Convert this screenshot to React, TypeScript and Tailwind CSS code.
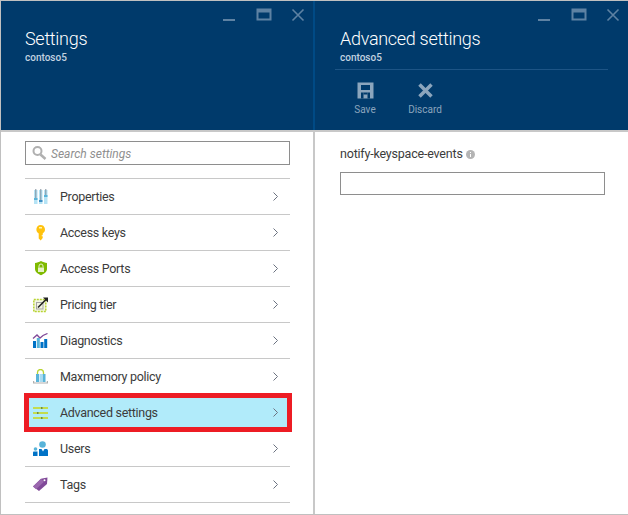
import React from "react";

const font = "font-['Roboto','Open_Sans',sans-serif]";

function WinControls() {
  return (
    <div className="absolute top-[7px] right-[8px] flex items-start">
      <svg width="14" height="14" viewBox="0 0 14 14" className="mr-[20px] mt-[1px]"><rect x="1" y="10" width="12" height="2" fill="#5e82a3" /></svg>
      <svg width="16" height="14" viewBox="0 0 16 14" className="mr-[19px]"><path d="M1.500 1.500h13v10h-13z M1.500 3.500h13" fill="none" stroke="#5e82a3" strokeWidth="2" /></svg>
      <svg width="14" height="14" viewBox="0 0 14 14"><path d="M1.500 1.500l11 11M12.500 1.500l-11 11" stroke="#5e82a3" strokeWidth="1.600" fill="none" /></svg>
    </div>
  );
}

const icons: Record<string, React.ReactNode> = {
  props: (
    <svg width="16" height="16" viewBox="0 0 16 16">
      <rect x="2" y="1" width="3.500" height="14" fill="#b5e3f5" />
      <rect x="7" y="1" width="3.500" height="14" fill="#b5e3f5" />
      <rect x="12" y="1" width="3.500" height="14" fill="#b5e3f5" />
      <rect x="3.300" y="0" width="1" height="9" fill="#7f8f9d" />
      <rect x="8.300" y="0" width="1" height="12" fill="#7f8f9d" />
      <rect x="13.300" y="0" width="1" height="6" fill="#7f8f9d" />
      <rect x="2" y="9" width="3.500" height="2" fill="#59b4d9" />
      <rect x="7" y="11" width="3.500" height="2" fill="#3e8fc4" />
      <rect x="12" y="6" width="3.500" height="2" fill="#59b4d9" />
    </svg>
  ),
  key: (
    <svg width="16" height="16" viewBox="0 0 16 16">
      <path d="M8.500 0a4.500 4.500 0 0 1 2.200 8.400v1.800h-1v1h1V13l-2 2.500-2-2V8.400A4.500 4.500 0 0 1 8.500 0z" fill="#ffc20e" />
      <rect x="7" y="2" width="3" height="1.500" fill="#fff3b0" />
    </svg>
  ),
  shield: (
    <svg width="16" height="16" viewBox="0 0 16 16">
      <path d="M9 0c2 1.200 4 1.800 6 2v6c0 3-3 4.800-6 6.200-3-1.400-6-3.200-6-6.200V2c2-.2 4-.8 6-2z" fill="#7fba00" />
      <rect x="6" y="6.500" width="6" height="4.500" fill="#e6f2c8" />
      <path d="M7 6.500V5a2 2 0 0 1 4 0v1.500" fill="none" stroke="#e6f2c8" strokeWidth="1" />
    </svg>
  ),
  pricing: (
    <svg width="16" height="16" viewBox="0 0 16 16">
      <rect x="1.800" y="2.500" width="12" height="12" fill="#f3f6e2" stroke="#b8d432" strokeWidth="1.500" strokeDasharray="2 1" />
      <rect x="4.500" y="5.500" width="6.500" height="6.500" fill="none" stroke="#a5a5a5" strokeWidth="1" />
      <path d="M6 10.500L14.500 2" stroke="#222" strokeWidth="1.600" />
      <path d="M11 0.500h5v5z" fill="#222" />
    </svg>
  ),
  diag: (
    <svg width="16" height="16" viewBox="0 0 16 16">
      <path d="M1 5.500l4-3.500 3 3 3-2.500 4.500-2" fill="none" stroke="#804998" strokeWidth="1.300" />
      <rect x="1" y="8" width="3" height="7" fill="#0072c6" />
      <rect x="4.800" y="5" width="3" height="10" fill="#59b4d9" />
      <rect x="8.500" y="9" width="3" height="6" fill="#0072c6" />
      <rect x="12.200" y="6" width="3" height="9" fill="#0072c6" />
    </svg>
  ),
  mem: (
    <svg width="16" height="16" viewBox="0 0 16 16">
      <path d="M5.500 6V3.500a3 3 0 0 1 6 0V6" fill="none" stroke="#b8d432" strokeWidth="1.300" />
      <rect x="4" y="5" width="3" height="8" fill="#59b4d9" />
      <rect x="7.500" y="5" width="2.500" height="8" fill="#a8dcf2" />
      <rect x="10.500" y="5" width="3" height="8" fill="#59b4d9" />
      <path d="M1.600 12v2h13.800v-2" fill="none" stroke="#b0b0b0" strokeWidth="1.200" />
    </svg>
  ),
  adv: (
    <svg width="16" height="16" viewBox="0 0 16 16">
      <rect x="1" y="2" width="15" height="2" fill="#c3dc4e" />
      <rect x="1" y="7" width="15" height="2" fill="#c3dc4e" />
      <rect x="1" y="12" width="15" height="2" fill="#c3dc4e" />
      <rect x="9" y="2" width="1.500" height="2" fill="#6f8a45" />
      <rect x="5" y="7" width="1.500" height="2" fill="#6f8a45" />
      <rect x="9" y="12" width="1.500" height="2" fill="#6f8a45" />
    </svg>
  ),
  users: (
    <svg width="16" height="16" viewBox="0 0 16 16">
      <circle cx="10.500" cy="3.500" r="3.300" fill="#59b4d9" />
      <path d="M7 15V8h7c1 0 2 .5 2 1.500V15z" fill="#0072c6" />
      <path d="M9.500 8l1.500 2.500L12.500 8z" fill="#fff" />
      <circle cx="3.500" cy="8" r="1.800" fill="#59b4d9" />
      <path d="M1 15v-3.500c0-.5.500-1 1-1h3.500V15z" fill="#0072c6" />
    </svg>
  ),
  tag: (
    <svg width="16" height="16" viewBox="0 0 16 16">
      <path d="M1 9.500L9 1.800 15.500 0.500 15 7l-8 7z" fill="#804998" />
      <path d="M1 9.500L9 1.800l3 3-8 7.500z" fill="#9a67ae" />
      <circle cx="12.500" cy="3.200" r="1" fill="#fff" />
    </svg>
  ),
};

function Row({ icon, label, selected }: { icon: string; label: string; selected?: boolean }) {
  return (
    <div className={`relative flex h-[36px] items-center border-b border-[#c8c8c8] pl-[7px] pr-[12px] ${selected ? "bg-[#b1ebfa]" : ""}`}>
      <span className="flex w-[28px] shrink-0">{icons[icon]}</span>
      <span className="flex-1 pt-[2px] text-[12.500px] tracking-[-0.3px] text-[#3c3c3c]">{label}</span>
      <svg width="5" height="9" viewBox="0 0 5 9"><path d="M.5 .5l4 4-4 4" fill="none" stroke="#6b7280" strokeWidth="1" /></svg>
      {selected && <span className="absolute -top-[2px] -bottom-[2px] -left-[1px] -right-[2px] border-[5px] border-[#ed1c24]" />}
    </div>
  );
}

export default function App() {
  const rows: [string, string][] = [
    ["props", "Properties"],
    ["key", "Access keys"],
    ["shield", "Access Ports"],
    ["pricing", "Pricing tier"],
    ["diag", "Diagnostics"],
    ["mem", "Maxmemory policy"],
    ["adv", "Advanced settings"],
    ["users", "Users"],
    ["tag", "Tags"],
  ];
  return (
    <div className={`flex h-[515px] w-[628px] border-t border-b border-l border-[#c0c0c0] bg-white ${font}`}>
      <div className="flex w-[312px] shrink-0 flex-col">
        <div className="relative h-[129px] shrink-0 bg-[#003a6b] pl-[24px] pt-[25px] text-white">
          <WinControls />
          <div className="text-[18px] font-light leading-[25px] tracking-[-0.3px]">Settings</div>
          <div className="text-[10px] font-medium leading-[14px] text-[#c3d3e0]">contoso5</div>
        </div>
        <div className="flex-1 border-t-2 border-[#c8c8c8] pl-[24px] pr-[23px] pt-[9px]">
          <div className="flex h-[24px] items-center border-[1.500px] border-[#8e8e8e] pl-[5px]">
            <svg width="16" height="16" viewBox="0 0 16 16" className="mr-[4px]">
              <circle cx="6.500" cy="6" r="4" fill="none" stroke="#b0b0b0" strokeWidth="2" />
              <path d="M9.500 9.500l5 4.500" stroke="#b0b0b0" strokeWidth="2.500" />
            </svg>
            <span className="pt-[1px] text-[12px] italic text-[#8f8f8f]">Search settings</span>
          </div>
          <div className="mt-[13px] border-t border-[#c8c8c8]">
            {rows.map(([i, l]) => (
              <Row key={l} icon={i} label={l} selected={l === "Advanced settings"} />
            ))}
          </div>
        </div>
      </div>
      <div className="w-[2px] shrink-0 bg-[linear-gradient(to_bottom,#004a85_129px,#c8c8c8_129px)]" />
      <div className="flex flex-1 flex-col">
        <div className="relative h-[129px] shrink-0 bg-[#003a6b] pl-[25px] pt-[25px] text-white">
          <WinControls />
          <div className="text-[18px] font-light leading-[25px] tracking-[-0.3px]">Advanced settings</div>
          <div className="text-[10px] font-medium leading-[14px] text-[#c3d3e0]">contoso5</div>
          <div className="-ml-[5px] mr-[20px] mt-[4px] border-t border-[#1d5485]" />
          <div className="mt-[12px] flex text-[10px] leading-[14px] text-[#8ba5bd]">
            <div className="flex w-[50px] flex-col items-center">
              <svg width="17" height="17" viewBox="0 0 17 17">
                <path d="M0.500 0.500h16v16h-16z" fill="#8ba5bd" />
                <rect x="4" y="3" width="9" height="5" fill="#003a6b" />
                <rect x="4" y="10.500" width="2.500" height="6" fill="#003a6b" />
                <rect x="10.500" y="10.500" width="2.500" height="6" fill="#003a6b" />
                <rect x="7.500" y="13" width="2" height="2" fill="#8ba5bd" />
                <rect x="6.500" y="10.500" width="4" height="2" fill="#003a6b" />
              </svg>
              <span className="mt-[4px]">Save</span>
            </div>
            <div className="ml-[19px] flex w-[32px] flex-col items-center">
              <svg width="17" height="17" viewBox="0 0 17 17">
                <path d="M2.500 2.500l12 12M14.500 2.500l-12 12" stroke="#8ba5bd" strokeWidth="3.500" fill="none" />
              </svg>
              <span className="mt-[4px]">Discard</span>
            </div>
          </div>
        </div>
        <div className="flex-1 border-t-2 border-[#c8c8c8] pl-[25px] pr-[23px] pt-[14px]">
          <div className="flex items-center text-[12.500px] leading-[16px] tracking-[-0.2px] text-[#3c3c3c]">
            notify-keyspace-events
            <svg width="9" height="9" viewBox="0 0 9 9" className="ml-[3px]">
              <circle cx="4.500" cy="4.500" r="4.500" fill="#b4b4b4" />
              <rect x="4" y="4" width="1" height="3" fill="#fff" />
              <rect x="4" y="2" width="1" height="1" fill="#fff" />
            </svg>
          </div>
          <div className="mt-[10px] h-[23px] border-[1.500px] border-[#8e8e8e]" />
        </div>
      </div>
    </div>
  );
}
